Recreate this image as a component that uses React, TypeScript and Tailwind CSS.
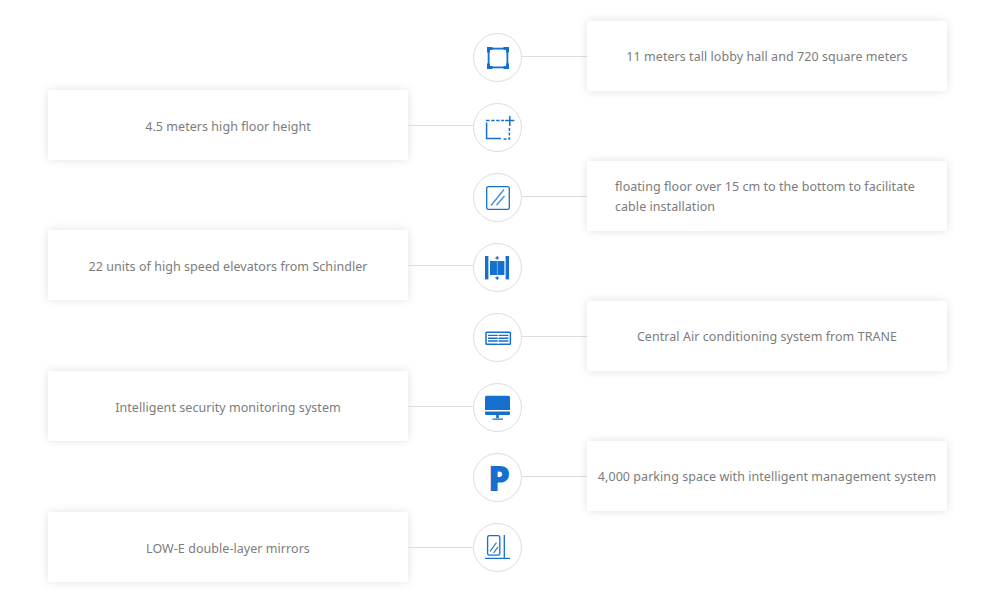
import React from 'react';

const BLUE = '#1470cc';
const svgClass = 'w-[49px] h-[49px] shrink-0';

const icons: React.ReactNode[] = [
  <svg key="area" viewBox="0 0 49 49" className={svgClass} fill="none">
    <rect x="15.6" y="15.6" width="18.8" height="18.8" stroke={BLUE} strokeWidth="1.8" />
    <path d="M14 14h5.5v3H17v2.5h-3zM36 14h-5.5v3H33v2.5h3zM14 36h5.5v-3H17v-2.5h-3zM36 36h-5.5v-3H33v-2.5h3z" fill={BLUE} />
  </svg>,
  <svg key="height" viewBox="0 0 49 49" className={svgClass} fill="none" stroke={BLUE} strokeWidth="1.5">
    <path d="M13.6 23V35.6H28" />
    <path d="M13.6 23V17.6H31" strokeDasharray="3.4 1.6" />
    <path d="M36.4 25V36H29.5" strokeDasharray="3 1.6" />
    <path d="M36.8 13v10M32 17.6h9.4" />
  </svg>,
  <svg key="floor" viewBox="0 0 49 49" className={svgClass} fill="none">
    <rect x="13.7" y="13.7" width="22.6" height="22.6" rx="1.6" stroke={BLUE} strokeWidth="1.3" />
    <path d="M18 32.5L31 16.5M23.5 32L31.5 23" stroke="#3f8ed9" strokeWidth="1.3" />
  </svg>,
  <svg key="lift" viewBox="0 0 49 49" className={svgClass}>
    <rect x="12" y="13" width="3.4" height="23.4" fill={BLUE} />
    <rect x="32.6" y="13" width="3.4" height="23.4" fill={BLUE} />
    <rect x="17" y="18" width="14.4" height="14" fill={BLUE} />
    <rect x="23.9" y="18" width="0.7" height="14" fill="#9cc6ee" />
    <path d="M24.2 13l2.4 2.4h-1.8v1.4h-1.2v-1.4h-1.8zM24.2 37l2.4-2.4h-1.8v-1.4h-1.2v1.4h-1.8z" fill={BLUE} />
  </svg>,
  <svg key="air" viewBox="0 0 49 49" className={svgClass} fill="none">
    <rect x="13" y="19.2" width="24.4" height="12" rx="0.8" stroke={BLUE} strokeWidth="1.5" />
    <path d="M15 22.4h20.4M15 25.2h20.4M15 28h20.4" stroke={BLUE} strokeWidth="1.4" />
    <path d="M25.2 20v11" stroke="#ffffff" strokeWidth="0.8" />
  </svg>,
  <svg key="monitor" viewBox="0 0 49 49" className={svgClass}>
    <path d="M13.5 12.7h22a1.5 1.5 0 0 1 1.5 1.5V27H12V14.2a1.5 1.5 0 0 1 1.5-1.5z" fill={BLUE} />
    <path d="M12 28.6h25v2a1.5 1.5 0 0 1-1.5 1.5h-22a1.5 1.5 0 0 1-1.5-1.5z" fill={BLUE} />
    <rect x="23.2" y="32" width="2.6" height="3.4" fill={BLUE} />
    <rect x="19.5" y="35.3" width="10.5" height="1.7" fill="#4a94dc" />
  </svg>,
  <span key="parking" className="ml-[3px] text-[35px] leading-none font-extrabold text-[#1470cc] font-['Open_Sans',sans-serif]">P</span>,
  <svg key="mirror" viewBox="0 0 49 49" className={svgClass} fill="none" stroke={BLUE}>
    <rect x="14.6" y="12.6" width="12.2" height="19.6" rx="1.8" strokeWidth="1.3" />
    <path d="M17 28.5L23.5 19.5M20.5 30L25 24" strokeWidth="1.2" />
    <path d="M31.3 12v23.4M12 35.4h25" strokeWidth="1.3" />
  </svg>,
];

const leftCards = [
  '4.5 meters high floor height',
  '22 units of high speed elevators from Schindler',
  'Intelligent security monitoring system',
  'LOW-E double-layer mirrors',
];

const rightCards = [
  '11 meters tall lobby hall and 720 square meters',
  'floating floor over 15 cm to the bottom to facilitate cable installation',
  'Central Air conditioning system from TRANE',
  '4,000 parking space with intelligent management system',
];

const Card = ({ text, left }: { text: string; left?: boolean }) => {
  const isLong = text.length > 60;
  return (
    <div
      className={`w-[360px] h-[70px] shrink-0 flex items-center rounded-[2px] bg-white shadow-[0_0_10px_rgba(0,0,0,0.12)] ${
        isLong ? 'pl-[28px] pr-[20px] text-left' : 'px-2 justify-center text-center'
      }`}
    >
      <p className={`text-[12.5px] leading-[20px] tracking-[0.05px] text-[#7c7c7c] ${left ? 'mt-[3px]' : 'mt-[1px]'}`}>{text}</p>
    </div>
  );
};

export default function App() {
  return (
    <div className="w-[1000px] h-[600px] overflow-hidden bg-white flex pl-[48px] font-['Noto_Sans',sans-serif]">
      <div className="w-[425px] shrink-0 flex flex-col pt-[90px]">
        {leftCards.map((text, i) => (
          <div key={text} className={`flex items-center ${i === 0 ? '' : i === 1 ? 'mt-[70px]' : 'mt-[71px]'}`}>
            <Card text={text} left />
            <div className="h-px flex-1 bg-[#dddddd]" />
          </div>
        ))}
      </div>

      <div className="w-[49px] shrink-0 flex flex-col gap-[21px] pt-[33px]">
        {icons.map((icon, i) => (
          <div
            key={i}
            className="w-[49px] h-[49px] shrink-0 rounded-full border border-[#dddddd] bg-white flex items-center justify-center"
          >
            {icon}
          </div>
        ))}
      </div>

      <div className="w-[425px] shrink-0 flex flex-col gap-[70px] pt-[21px]">
        {rightCards.map((text) => (
          <div key={text} className="flex items-center">
            <div className="h-px flex-1 bg-[#dddddd]" />
            <Card text={text} />
          </div>
        ))}
      </div>
    </div>
  );
}
